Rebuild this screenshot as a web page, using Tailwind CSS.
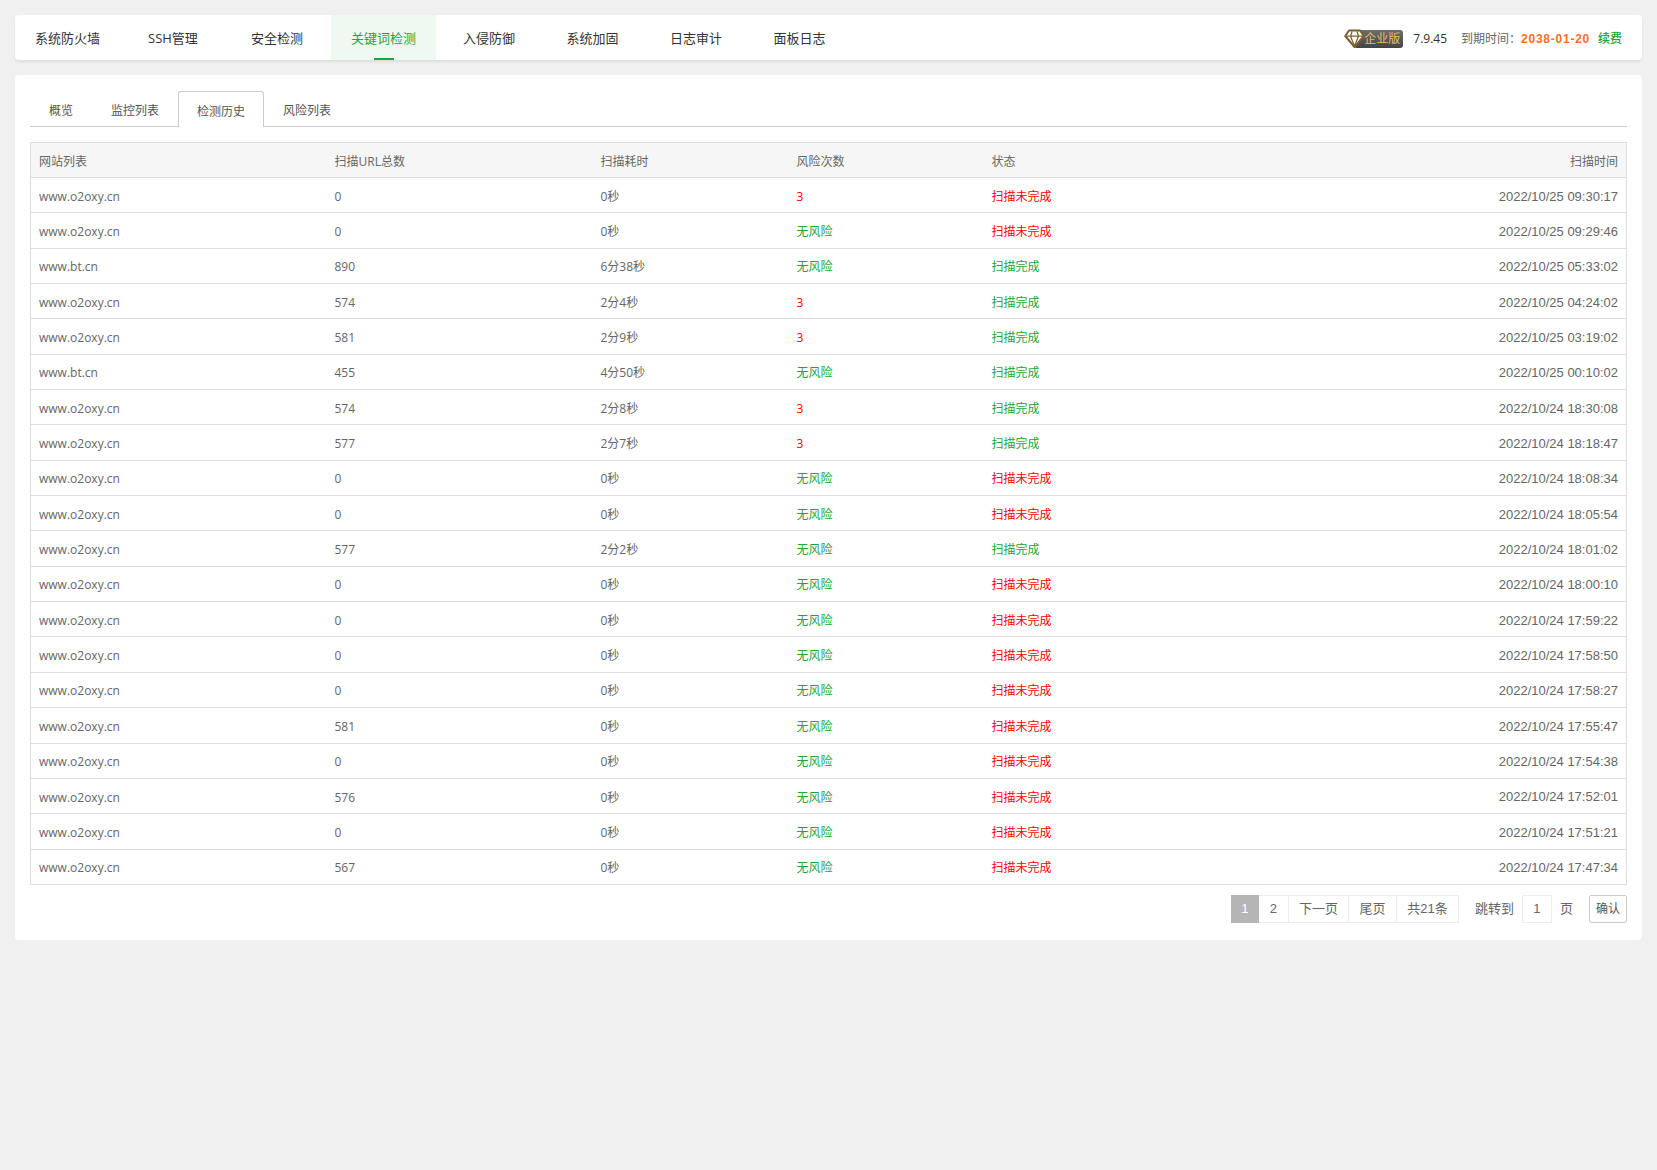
<!DOCTYPE html>
<html lang="en">
<head>
    <meta charset="UTF-8">
    <title>关键词检测</title>
    <script src="https://cdn.jsdelivr.net/npm/@tailwindcss/browser@4"></script>
</head>
<body class="bg-[#f0f0f0] min-h-screen font-['Open_Sans','Noto_Sans_CJK_SC',sans-serif] text-xs text-[#666]">
    <div class="px-[15px] pt-[15px]">
        <!-- top menu -->
        <div class="flex items-center justify-between h-[45px] bg-white rounded-[4px] shadow-[0_2px_3px_rgba(0,0,0,0.08)] pr-[20px]">
            <nav class="flex h-full text-[13px] text-[#333]">
                <a class="flex items-center w-[105px] pl-5 pt-[2px]">系统防火墙</a>
                <a class="flex items-center w-[102px] pl-[28px] pt-[2px]">SSH管理</a>
                <a class="flex items-center w-[109px] pl-[29px] pt-[2px]">安全检测</a>
                <a class="relative flex items-center w-[105px] pl-5 pt-[2px] bg-[#f0f9f1] text-[#20a53a]">关键词检测
                    <span class="absolute bottom-0 left-1/2 -translate-x-1/2 w-5 h-[2px] bg-[#20a53a]"></span>
                </a>
                <a class="flex items-center w-[103.5px] pl-[27px] pt-[2px]">入侵防御</a>
                <a class="flex items-center w-[103.5px] pl-[27px] pt-[2px]">系统加固</a>
                <a class="flex items-center w-[103.5px] pl-[27px] pt-[2px]">日志审计</a>
                <a class="flex items-center w-[103.5px] pl-[27px] pt-[2px]">面板日志</a>
            </nav>
            <div class="flex items-center pt-[2px]">
                <div class="relative flex items-center mr-[10px]">
                    <svg class="absolute left-0 top-[-1px] z-10" width="21" height="20" viewBox="0 0 21 20" fill="none">
                        <path d="M5 1.5H16L19.8 7L10.5 18L1.2 7Z" fill="#fff" stroke="#7d5f33" stroke-width="2" stroke-linejoin="round"/>
                        <path d="M2 7.2H19M6.5 7.2L10.5 17M14.5 7.2L10.5 17M6.5 7.2L8 2.5M14.5 7.2L13 2.5" stroke="#7d5f33" stroke-width="1.2"/>
                    </svg>
                    <span class="ml-[10px] pl-[10px] pr-[3px] h-[18px] flex items-center rounded-[3px] bg-gradient-to-b from-[#6e6e6e] to-[#444] text-[#e8bb6c] text-xs">企业版</span>
                </div>
                <span class="text-[#333] mr-[14px]">7.9.45</span>
                <span>到期时间：</span>
                <span class="font-bold text-[#fc6d26] tracking-[0.75px] mr-2 font-['Liberation_Sans',sans-serif]">2038-01-20</span>
                <span class="text-[#20a53a] font-medium">续费</span>
            </div>
        </div>

        <!-- main card -->
        <div class="mt-[15px] h-[865px] bg-white rounded-[4px] px-[15px] pt-[16px]">
            <div class="flex h-[36px] border-b border-[#ccc] text-[#555]">
                <a class="flex items-center pt-[4px] px-[18px] ml-[1px] mr-[2px]">概览</a>
                <a class="flex items-center pt-[4px] px-[18px] mr-[1px]">监控列表</a>
                <a class="flex items-center pt-[4px] px-[18px] h-[36px] bg-white border border-b-0 border-[#ccc] rounded-t-[3px]">检测历史</a>
                <a class="flex items-center pt-[4px] pl-[19px] pr-[18px]">风险列表</a>
            </div>

            <table class="mt-[15px] w-full table-fixed border-collapse border border-[#ddd]">
                <thead>
                    <tr class="h-[35px] bg-[#f6f6f6] border-b border-[#ddd]">
                        <th class="w-[296px] px-2 pt-[3px] font-normal text-left">网站列表</th>
                        <th class="w-[266px] px-2 pt-[3px] font-normal text-left">扫描URL总数</th>
                        <th class="w-[196px] px-2 pt-[3px] font-normal text-left">扫描耗时</th>
                        <th class="w-[195px] px-2 pt-[3px] font-normal text-left">风险次数</th>
                        <th class="w-[195px] px-2 pt-[3px] font-normal text-left">状态</th>
                        <th class="px-2 pt-[3px] font-normal text-right">扫描时间</th>
                    </tr>
                </thead>
                <tbody id="rows">
                </tbody>
            </table>

            <div class="flex justify-end items-center mt-[10px] h-[28px] text-[13px] font-['Liberation_Sans','Noto_Sans_CJK_SC',sans-serif]">
                <span class="flex items-center justify-center w-[28px] h-[28px] bg-[#b5b5b5] text-white">1</span>
                <span class="flex items-center justify-center w-[30px] h-[28px] border border-[#eee] border-l-0">2</span>
                <span class="flex items-center justify-center w-[60px] h-[28px] border border-[#eee] border-l-0">下一页</span>
                <span class="flex items-center justify-center w-[48px] h-[28px] border border-[#eee] border-l-0">尾页</span>
                <span class="flex items-center justify-center w-[62px] h-[28px] border border-[#eee] border-l-0">共21条</span>
                <span class="ml-[16px]">跳转到</span>
                <span class="ml-[8px] flex items-center justify-center w-[30px] h-[28px] border border-[#eee]">1</span>
                <span class="ml-[8px]">页</span>
                <button class="ml-[16px] w-[38px] h-[28px] border border-[#ccc] rounded-[2px] bg-white text-xs text-[#555]">确认</button>
            </div>
        </div>
    </div>

    <script>
        const history = [
            ['www.o2oxy.cn', '0', '0秒', '3', 0, '2022/10/25 09:30:17'],
            ['www.o2oxy.cn', '0', '0秒', '无风险', 0, '2022/10/25 09:29:46'],
            ['www.bt.cn', '890', '6分38秒', '无风险', 1, '2022/10/25 05:33:02'],
            ['www.o2oxy.cn', '574', '2分4秒', '3', 1, '2022/10/25 04:24:02'],
            ['www.o2oxy.cn', '581', '2分9秒', '3', 1, '2022/10/25 03:19:02'],
            ['www.bt.cn', '455', '4分50秒', '无风险', 1, '2022/10/25 00:10:02'],
            ['www.o2oxy.cn', '574', '2分8秒', '3', 1, '2022/10/24 18:30:08'],
            ['www.o2oxy.cn', '577', '2分7秒', '3', 1, '2022/10/24 18:18:47'],
            ['www.o2oxy.cn', '0', '0秒', '无风险', 0, '2022/10/24 18:08:34'],
            ['www.o2oxy.cn', '0', '0秒', '无风险', 0, '2022/10/24 18:05:54'],
            ['www.o2oxy.cn', '577', '2分2秒', '无风险', 1, '2022/10/24 18:01:02'],
            ['www.o2oxy.cn', '0', '0秒', '无风险', 0, '2022/10/24 18:00:10'],
            ['www.o2oxy.cn', '0', '0秒', '无风险', 0, '2022/10/24 17:59:22'],
            ['www.o2oxy.cn', '0', '0秒', '无风险', 0, '2022/10/24 17:58:50'],
            ['www.o2oxy.cn', '0', '0秒', '无风险', 0, '2022/10/24 17:58:27'],
            ['www.o2oxy.cn', '581', '0秒', '无风险', 0, '2022/10/24 17:55:47'],
            ['www.o2oxy.cn', '0', '0秒', '无风险', 0, '2022/10/24 17:54:38'],
            ['www.o2oxy.cn', '576', '0秒', '无风险', 0, '2022/10/24 17:52:01'],
            ['www.o2oxy.cn', '0', '0秒', '无风险', 0, '2022/10/24 17:51:21'],
            ['www.o2oxy.cn', '567', '0秒', '无风险', 0, '2022/10/24 17:47:34']
        ];

        const tbody = document.getElementById('rows');
        history.forEach(row => {
            const tr = document.createElement('tr');
            tr.className = 'h-[35.35px] border-b border-[#ddd]';
            const riskClass = row[3] === '3' ? 'text-[#ff0000]' : 'text-[#20a53a]';
            const stateClass = row[4] ? 'text-[#20a53a]' : 'text-[#ff0000]';
            tr.innerHTML = `
                <td class="px-2 pt-[3px]">${row[0]}</td>
                <td class="px-2 pt-[3px]">${row[1]}</td>
                <td class="px-2 pt-[3px]">${row[2]}</td>
                <td class="px-2 pt-[3px] ${riskClass}">${row[3]}</td>
                <td class="px-2 pt-[3px] ${stateClass}">${row[4] ? '扫描完成' : '扫描未完成'}</td>
                <td class="px-2 pt-[2px] text-right text-[13px] font-['Liberation_Sans',sans-serif]">${row[5]}</td>
            `;
            tbody.appendChild(tr);
        });
    </script>
</body>
</html>
